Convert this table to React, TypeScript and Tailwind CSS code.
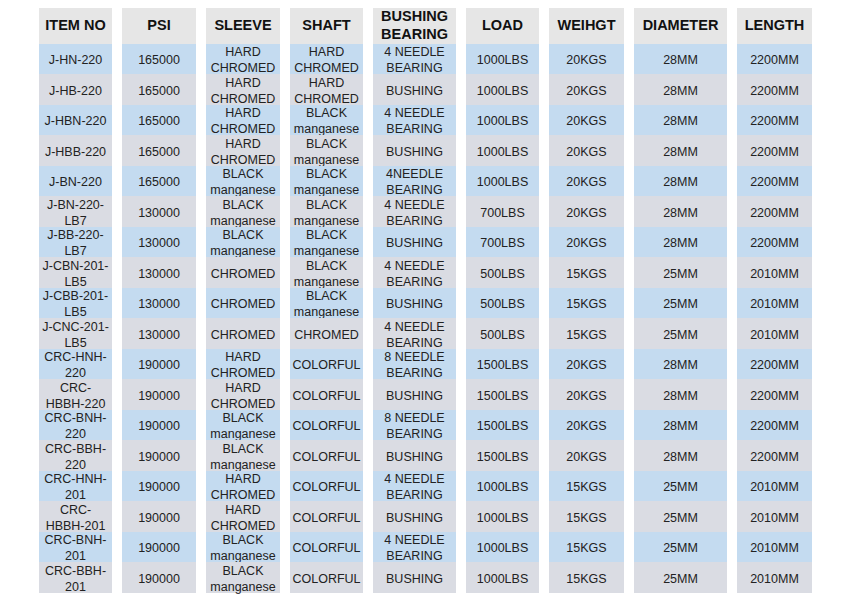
import React from "react";

const headers = ["ITEM NO", "PSI", "SLEEVE", "SHAFT", "BUSHING\nBEARING", "LOAD", "WEIHGT", "DIAMETER", "LENGTH"];

const HC = "HARD\nCHROMED";
const BM = "BLACK\nmanganese";
const NB4 = "4 NEEDLE\nBEARING";
const NB8 = "8 NEEDLE\nBEARING";

const rows: string[][] = [
  ["J-HN-220", "165000", HC, HC, NB4, "1000LBS", "20KGS", "28MM", "2200MM"],
  ["J-HB-220", "165000", HC, HC, "BUSHING", "1000LBS", "20KGS", "28MM", "2200MM"],
  ["J-HBN-220", "165000", HC, BM, NB4, "1000LBS", "20KGS", "28MM", "2200MM"],
  ["J-HBB-220", "165000", HC, BM, "BUSHING", "1000LBS", "20KGS", "28MM", "2200MM"],
  ["J-BN-220", "165000", BM, BM, "4NEEDLE\nBEARING", "1000LBS", "20KGS", "28MM", "2200MM"],
  ["J-BN-220-\nLB7", "130000", BM, BM, NB4, "700LBS", "20KGS", "28MM", "2200MM"],
  ["J-BB-220-\nLB7", "130000", BM, BM, "BUSHING", "700LBS", "20KGS", "28MM", "2200MM"],
  ["J-CBN-201-\nLB5", "130000", "CHROMED", BM, NB4, "500LBS", "15KGS", "25MM", "2010MM"],
  ["J-CBB-201-\nLB5", "130000", "CHROMED", BM, "BUSHING", "500LBS", "15KGS", "25MM", "2010MM"],
  ["J-CNC-201-\nLB5", "130000", "CHROMED", "CHROMED", NB4, "500LBS", "15KGS", "25MM", "2010MM"],
  ["CRC-HNH-\n220", "190000", HC, "COLORFUL", NB8, "1500LBS", "20KGS", "28MM", "2200MM"],
  ["CRC-\nHBBH-220", "190000", HC, "COLORFUL", "BUSHING", "1500LBS", "20KGS", "28MM", "2200MM"],
  ["CRC-BNH-\n220", "190000", BM, "COLORFUL", NB8, "1500LBS", "20KGS", "28MM", "2200MM"],
  ["CRC-BBH-\n220", "190000", BM, "COLORFUL", "BUSHING", "1500LBS", "20KGS", "28MM", "2200MM"],
  ["CRC-HNH-\n201", "190000", HC, "COLORFUL", NB4, "1000LBS", "15KGS", "25MM", "2010MM"],
  ["CRC-\nHBBH-201", "190000", HC, "COLORFUL", "BUSHING", "1000LBS", "15KGS", "25MM", "2010MM"],
  ["CRC-BNH-\n201", "190000", BM, "COLORFUL", NB4, "1000LBS", "15KGS", "25MM", "2010MM"],
  ["CRC-BBH-\n201", "190000", BM, "COLORFUL", "BUSHING", "1000LBS", "15KGS", "25MM", "2010MM"],
];

export default function App() {
  return (
    <div className="h-[600px] w-[850px] bg-white pl-[39px] pt-[8px] font-['Liberation_Sans',Arial,sans-serif]">
      <div className="grid grid-cols-[73px_74px_74px_73px_83px_73px_75px_93px_75px] grid-rows-[36px_repeat(9,30px_31px)] gap-x-[10px]">
        {headers.map((h) => (
          <div
            key={h}
            className="flex items-center justify-center whitespace-pre-line bg-[#e6e6e6] pb-[2px] text-center text-[14.5px] font-bold leading-[18px] text-[#111]"
          >
            {h}
          </div>
        ))}
        {rows.map((row, i) =>
          row.map((cell, j) => (
            <div
              key={`${i}-${j}`}
              className={`flex items-center justify-center whitespace-pre-line pt-[2px] text-center text-[12.5px] leading-[16px] text-[#222] ${
                i % 2 === 0 ? "bg-[#c4dbf0]" : "bg-[#dadce3]"
              }`}
            >
              {cell}
            </div>
          ))
        )}
      </div>
    </div>
  );
}
